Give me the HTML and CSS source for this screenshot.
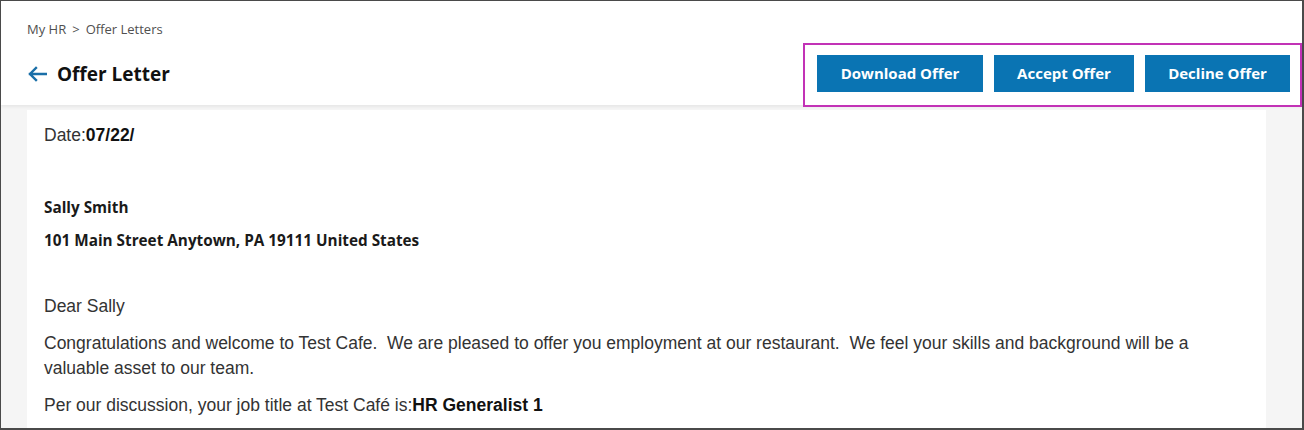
FILE: index.html
```html
<!DOCTYPE html>
<html>
<head>
<meta charset="utf-8">
<title>Offer Letter</title>
<link rel="stylesheet" href="styles.css">
</head>
<body>
<div class="frame">
  <header class="header">
    <div class="header-left">
      <nav class="crumbs"><span>My HR</span><span class="sep">&gt;</span><span>Offer Letters</span></nav>
      <div class="title-row">
        <svg class="back" width="20" height="16" viewBox="0 0 20 16" aria-hidden="true">
          <path d="M19 8H3M9 2L3 8l6 6" fill="none" stroke="#1a6fa8" stroke-width="2.4" stroke-linecap="square"/>
        </svg>
        <h1 class="title">Offer Letter</h1>
      </div>
    </div>
    <div class="actions">
      <button class="btn btn-download">Download Offer</button>
      <button class="btn btn-accept">Accept Offer</button>
      <button class="btn btn-decline">Decline Offer</button>
    </div>
  </header>
  <main class="content">
    <article class="letter">
      <p class="date">Date:<b>07/22/</b></p>
      <p class="name">Sally Smith</p>
      <p class="addr">101 Main Street Anytown, PA 19111 United States</p>
      <p class="greet">Dear Sally</p>
      <p class="para">Congratulations and welcome to Test Cafe.&nbsp; We are pleased to offer you employment at our restaurant.&nbsp; We feel your skills and background will be a valuable asset to our team.</p>
      <p class="para2">Per our discussion, your job title at Test Café is:<b>HR Generalist 1</b></p>
    </article>
  </main>
</div>
</body>
</html>
```

FILE: styles.css
```css
* { box-sizing: border-box; }
html, body { margin: 0; padding: 0; }
body { width: 1304px; height: 430px; overflow: hidden; background: #fff; }

.frame {
  width: 1304px;
  height: 430px;
  border-style: solid;
  border-color: #4a4a4a;
  border-width: 1px 2px 2px 1px;
  display: flex;
  flex-direction: column;
  overflow: hidden;
  background: #f5f5f5;
}

.header {
  height: 104px;
  flex: none;
  background: #fff;
  display: flex;
  justify-content: space-between;
  align-items: flex-end;
  position: relative;
  z-index: 2;
  box-shadow: 0 2px 3px rgba(0,0,0,0.06);
}

.header-left {
  align-self: stretch;
  padding: 19px 0 0 26px;
  display: flex;
  flex-direction: column;
}

.crumbs {
  font-family: "Open Sans", sans-serif;
  font-size: 13px;
  line-height: 18px;
  color: #505050;
  display: flex;
  gap: 6px;
}

.title-row {
  display: flex;
  align-items: center;
  margin-top: 22px;
  gap: 10px;
}
.back { margin-left: 0; flex: none; }
.title {
  margin: 0;
  font-family: "Open Sans", sans-serif;
  font-weight: 700;
  font-size: 19px;
  line-height: 28px;
  color: #111;
}

.actions {
  border: 2px solid #c232b6;
  padding: 10px 10px 13px 12px;
  display: flex;
  gap: 11px;
  margin-bottom: -2px;
  background: #fff;
}

.btn {
  height: 37px;
  border: 0;
  margin: 0;
  background: #0a74b3;
  color: #fff;
  font-family: "Open Sans", sans-serif;
  font-weight: 700;
  font-size: 15px;
  line-height: 35px;
  padding: 0;
}
.btn-download { width: 166px; }
.btn-accept { width: 140px; }
.btn-decline { width: 145px; }

.content {
  flex: 1;
  padding: 5px 36px 0 26px;
  background: #f5f5f5;
  display: flex;
}

.letter {
  flex: 1;
  background: #fff;
  padding: 13px 17px 0 17px;
  color: #222;
}

.letter p { margin: 0; }

.date {
  font-family: "Liberation Sans", Arial, sans-serif;
  font-size: 17.5px;
  line-height: 24px;
  color: #333;
}
.date b { color: #111; }

.name, .addr {
  font-family: "Open Sans", sans-serif;
  font-weight: 700;
  font-size: 15.3px;
  line-height: 20px;
  color: #1a1a1a;
}
.letter .name { margin-top: 50px; }
.letter .addr { margin-top: 13px; }

.greet, .para, .para2 {
  font-family: "Liberation Sans", Arial, sans-serif;
  font-size: 17.5px;
  color: #333;
}
.greet { line-height: 24px; }
.letter .greet { margin-top: 44px; }
.para, .para2 { line-height: 25px; }
.letter .para { margin-top: 13px; }
.letter .para2 { margin-top: 12px; }
.para2 b { color: #111; }
```
